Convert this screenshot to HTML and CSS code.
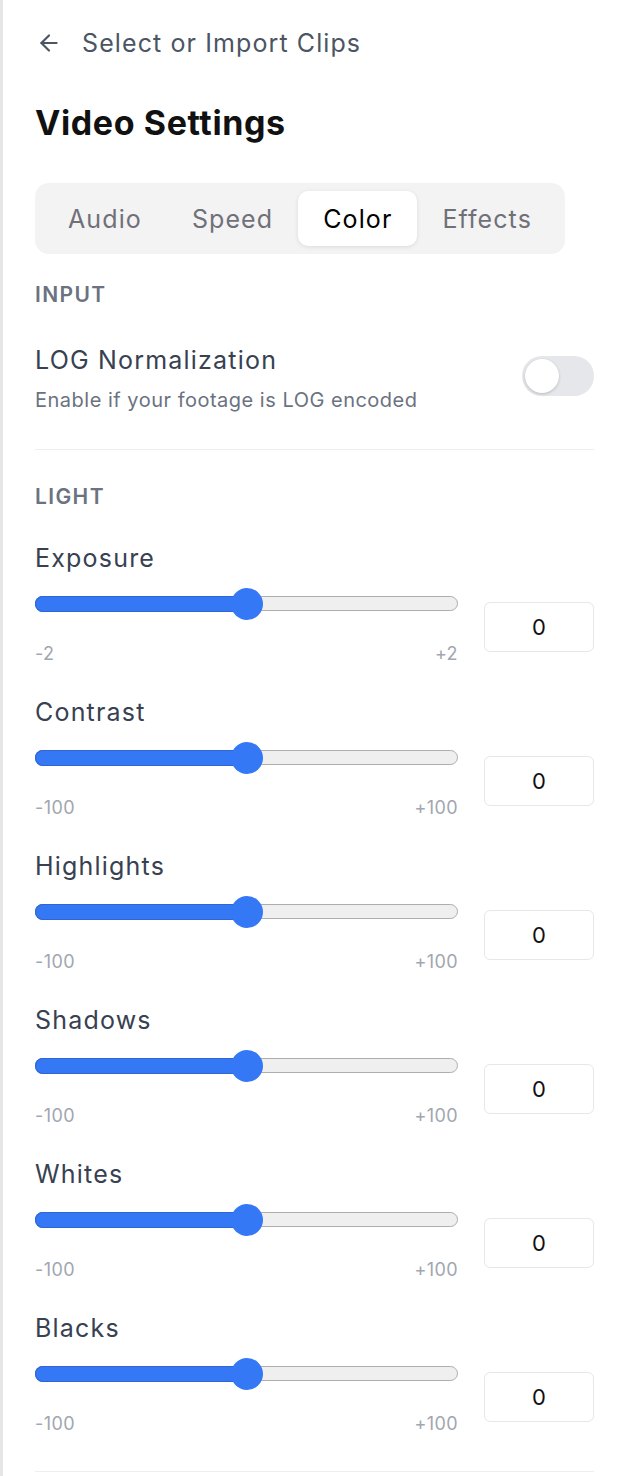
FILE: index.html
```html
<!DOCTYPE html>
<html lang="en">
  <head>
    <meta charset="UTF-8" />
    <meta name="viewport" content="width=device-width, initial-scale=1.0" />
    <title>Video Settings</title>
    <link rel="stylesheet" href="styles.css">
  </head>
  <body>
    <div class="panel">
      <a class="back" href="#">
        <svg class="back-icon" viewBox="0 0 24 24" width="26" height="26" fill="none" stroke="currentColor" stroke-width="2" stroke-linecap="round" stroke-linejoin="round">
          <path d="m12 19-7-7 7-7" />
          <path d="M19 12H5" />
        </svg>
        <span>Select or Import Clips</span>
      </a>

      <h1 class="title">Video Settings</h1>

      <div class="tabs">
        <button class="tab">Audio</button>
        <button class="tab">Speed</button>
        <button class="tab active">Color</button>
        <button class="tab">Effects</button>
      </div>

      <div class="section-label">Input</div>
      <div class="toggle-row">
        <div>
          <div class="toggle-title">LOG Normalization</div>
          <div class="toggle-desc">Enable if your footage is LOG encoded</div>
        </div>
        <div class="switch"><span class="knob"></span></div>
      </div>

      <hr class="divider" />

      <div class="section-label light">Light</div>
      <div id="controls"></div>

      <hr class="divider bottom" />
    </div>

    <script>
      // 滑块配置
      const controls = [
        { name: "Exposure", min: -2, max: 2 },
        { name: "Contrast", min: -100, max: 100 },
        { name: "Highlights", min: -100, max: 100 },
        { name: "Shadows", min: -100, max: 100 },
        { name: "Whites", min: -100, max: 100 },
        { name: "Blacks", min: -100, max: 100 },
      ];

      function renderControls() {
        let html = "";
        controls.forEach((c) => {
          const value = 0;
          const pct = ((value - c.min) / (c.max - c.min)) * 100;
          html += `
            <div class="control">
              <div class="control-name">${c.name}</div>
              <div class="control-row">
                <div class="slider">
                  <div class="track">
                    <div class="fill" style="width: ${pct}%"></div>
                    <div class="thumb" style="left: ${pct}%"></div>
                  </div>
                  <div class="range">
                    <span>${c.min}</span>
                    <span>+${c.max}</span>
                  </div>
                </div>
                <div class="value">${value}</div>
              </div>
            </div>
          `;
        });
        document.getElementById("controls").innerHTML = html;
      }

      renderControls();
    </script>
  </body>
</html>
```

FILE: styles.css
```css
body {
  margin: 0;
  font-family: Inter, "Liberation Sans", sans-serif;
  background: #fff;
}

.panel {
  min-height: 1476px;
  box-sizing: border-box;
  border-left: 3px solid #e6e6e6;
  padding: 27px 24px 0 32px;
}

.back {
  display: flex;
  align-items: center;
  gap: 20px;
  height: 32px;
  color: #4b5563;
  text-decoration: none;
  font-size: 25px;
  letter-spacing: 1.1px;
}

.back-icon {
  margin-left: 1px;
}

.title {
  margin: 44px 0 0;
  font-size: 34px;
  line-height: 40px;
  font-weight: 700;
  letter-spacing: 0.6px;
  color: #111;
}

.tabs {
  display: inline-flex;
  margin-top: 40px;
  padding: 8px;
  background: #f3f3f4;
  border-radius: 14px;
}

.tab {
  height: 55px;
  padding: 0 25px;
  border: none;
  border-radius: 10px;
  background: transparent;
  font-family: inherit;
  font-size: 25px;
  letter-spacing: 1.1px;
  color: #707078;
  cursor: pointer;
}

.tab.active {
  background: #fff;
  color: #000;
  box-shadow: 0 1px 4px rgba(0, 0, 0, 0.1);
}

.section-label {
  margin-top: 27px;
  font-size: 21px;
  line-height: 28px;
  font-weight: 600;
  letter-spacing: 1.4px;
  text-transform: uppercase;
  color: #6b7280;
}

.section-label.light {
  margin-top: 33px;
}

.toggle-row {
  display: flex;
  justify-content: space-between;
  margin-top: 35px;
}

.toggle-title {
  font-size: 25px;
  line-height: 32px;
  letter-spacing: 1.2px;
  color: #374151;
}

.toggle-desc {
  margin-top: 10px;
  font-size: 20px;
  line-height: 28px;
  letter-spacing: 0.5px;
  color: #6b7280;
}

.switch {
  position: relative;
  width: 72px;
  height: 40px;
  margin-top: 12px;
  border-radius: 20px;
  background: #e5e7eb;
}

.knob {
  position: absolute;
  top: 3px;
  left: 3px;
  width: 34px;
  height: 34px;
  border-radius: 50%;
  background: #fff;
  box-shadow: 0 1px 3px rgba(0, 0, 0, 0.2);
}

.divider {
  margin: 35px 0 0;
  border: none;
  border-top: 1px solid #eeeeef;
}

.divider.bottom {
  margin-top: 36px;
}

.control {
  margin-top: 31px;
}

.control + .control {
  margin-top: 31px;
}

.control-name {
  font-size: 25px;
  line-height: 32px;
  letter-spacing: 1.2px;
  color: #374151;
}

.control-row {
  display: flex;
  align-items: center;
  gap: 26px;
  margin-top: 14px;
}

.slider {
  flex: 1;
}

.track {
  position: relative;
  height: 15px;
  margin: 8px 0 0;
  box-sizing: border-box;
  border: 1.5px solid #adadad;
  border-radius: 8px;
  background: #efefef;
}

.fill {
  position: absolute;
  top: -1.5px;
  bottom: -1.5px;
  left: -1.5px;
  border-radius: 8px 0 0 8px;
  background: #3478f6;
  box-shadow: inset 0 0 0 1px #3166d0;
}

.thumb {
  position: absolute;
  top: 50%;
  width: 32px;
  height: 32px;
  margin: -16px 0 0 -16px;
  border-radius: 50%;
  background: #3478f6;
}

.range {
  display: flex;
  justify-content: space-between;
  margin-top: 32px;
  font-size: 18px;
  line-height: 22px;
  letter-spacing: 0.4px;
  color: #a1a6b0;
}

.value {
  width: 110px;
  height: 50px;
  box-sizing: border-box;
  border: 1.5px solid #e5e7eb;
  border-radius: 6px;
  display: flex;
  align-items: center;
  justify-content: center;
  font-size: 22px;
  color: #111;
}
```
